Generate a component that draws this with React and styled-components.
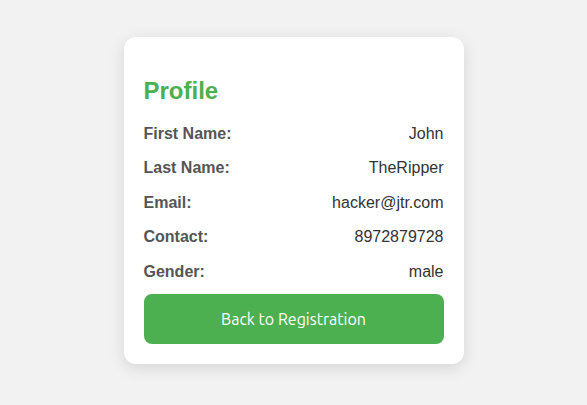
import React from "react";
import styled, { createGlobalStyle } from "styled-components";

const Global = createGlobalStyle`
  html, body { margin: 0; padding: 0; }
  body {
    background: #f2f2f2;
    font-family: "Liberation Sans", Arial, sans-serif;
  }
`;

const Page = styled.div`
  width: 587px;
  height: 405px;
  display: flex;
  justify-content: center;
  padding-top: 37px;
  box-sizing: border-box;
`;

const Card = styled.div`
  width: 340px;
  height: 327px;
  box-sizing: border-box;
  background: #fff;
  border-radius: 12px;
  box-shadow: 0 4px 16px rgba(0, 0, 0, 0.12);
  padding: 20px;
  display: flex;
  flex-direction: column;
`;

const Title = styled.h2`
  margin: 20px 0 20px;
  font-size: 24px;
  line-height: 28px;
  font-weight: bold;
  color: #4caf50;
`;

const Rows = styled.div`
  display: flex;
  flex-direction: column;
  gap: 16px;
`;

const Row = styled.div`
  display: flex;
  justify-content: space-between;
  font-size: 16px;
  line-height: 18.4px;
  height: 18.4px;
`;

const Label = styled.span`
  font-weight: bold;
  color: #555;
`;

const Value = styled.span`
  color: #333;
`;

const Button = styled.button`
  margin-top: 13px;
  height: 50px;
  width: 100%;
  flex-shrink: 0;
  border: none;
  border-radius: 8px;
  background: #4caf50;
  color: #fff;
  font-family: Ubuntu, "Liberation Sans", sans-serif;
  font-size: 16px;
  cursor: pointer;
`;

const data = [
  ["First Name:", "John"],
  ["Last Name:", "TheRipper"],
  ["Email:", "hacker@jtr.com"],
  ["Contact:", "8972879728"],
  ["Gender:", "male"],
];

export default function App() {
  return (
    <>
      <Global />
      <Page>
        <Card>
          <Title>Profile</Title>
          <Rows>
            {data.map(([l, v]) => (
              <Row key={l}>
                <Label>{l}</Label>
                <Value>{v}</Value>
              </Row>
            ))}
          </Rows>
          <Button>Back to Registration</Button>
        </Card>
      </Page>
    </>
  );
}
